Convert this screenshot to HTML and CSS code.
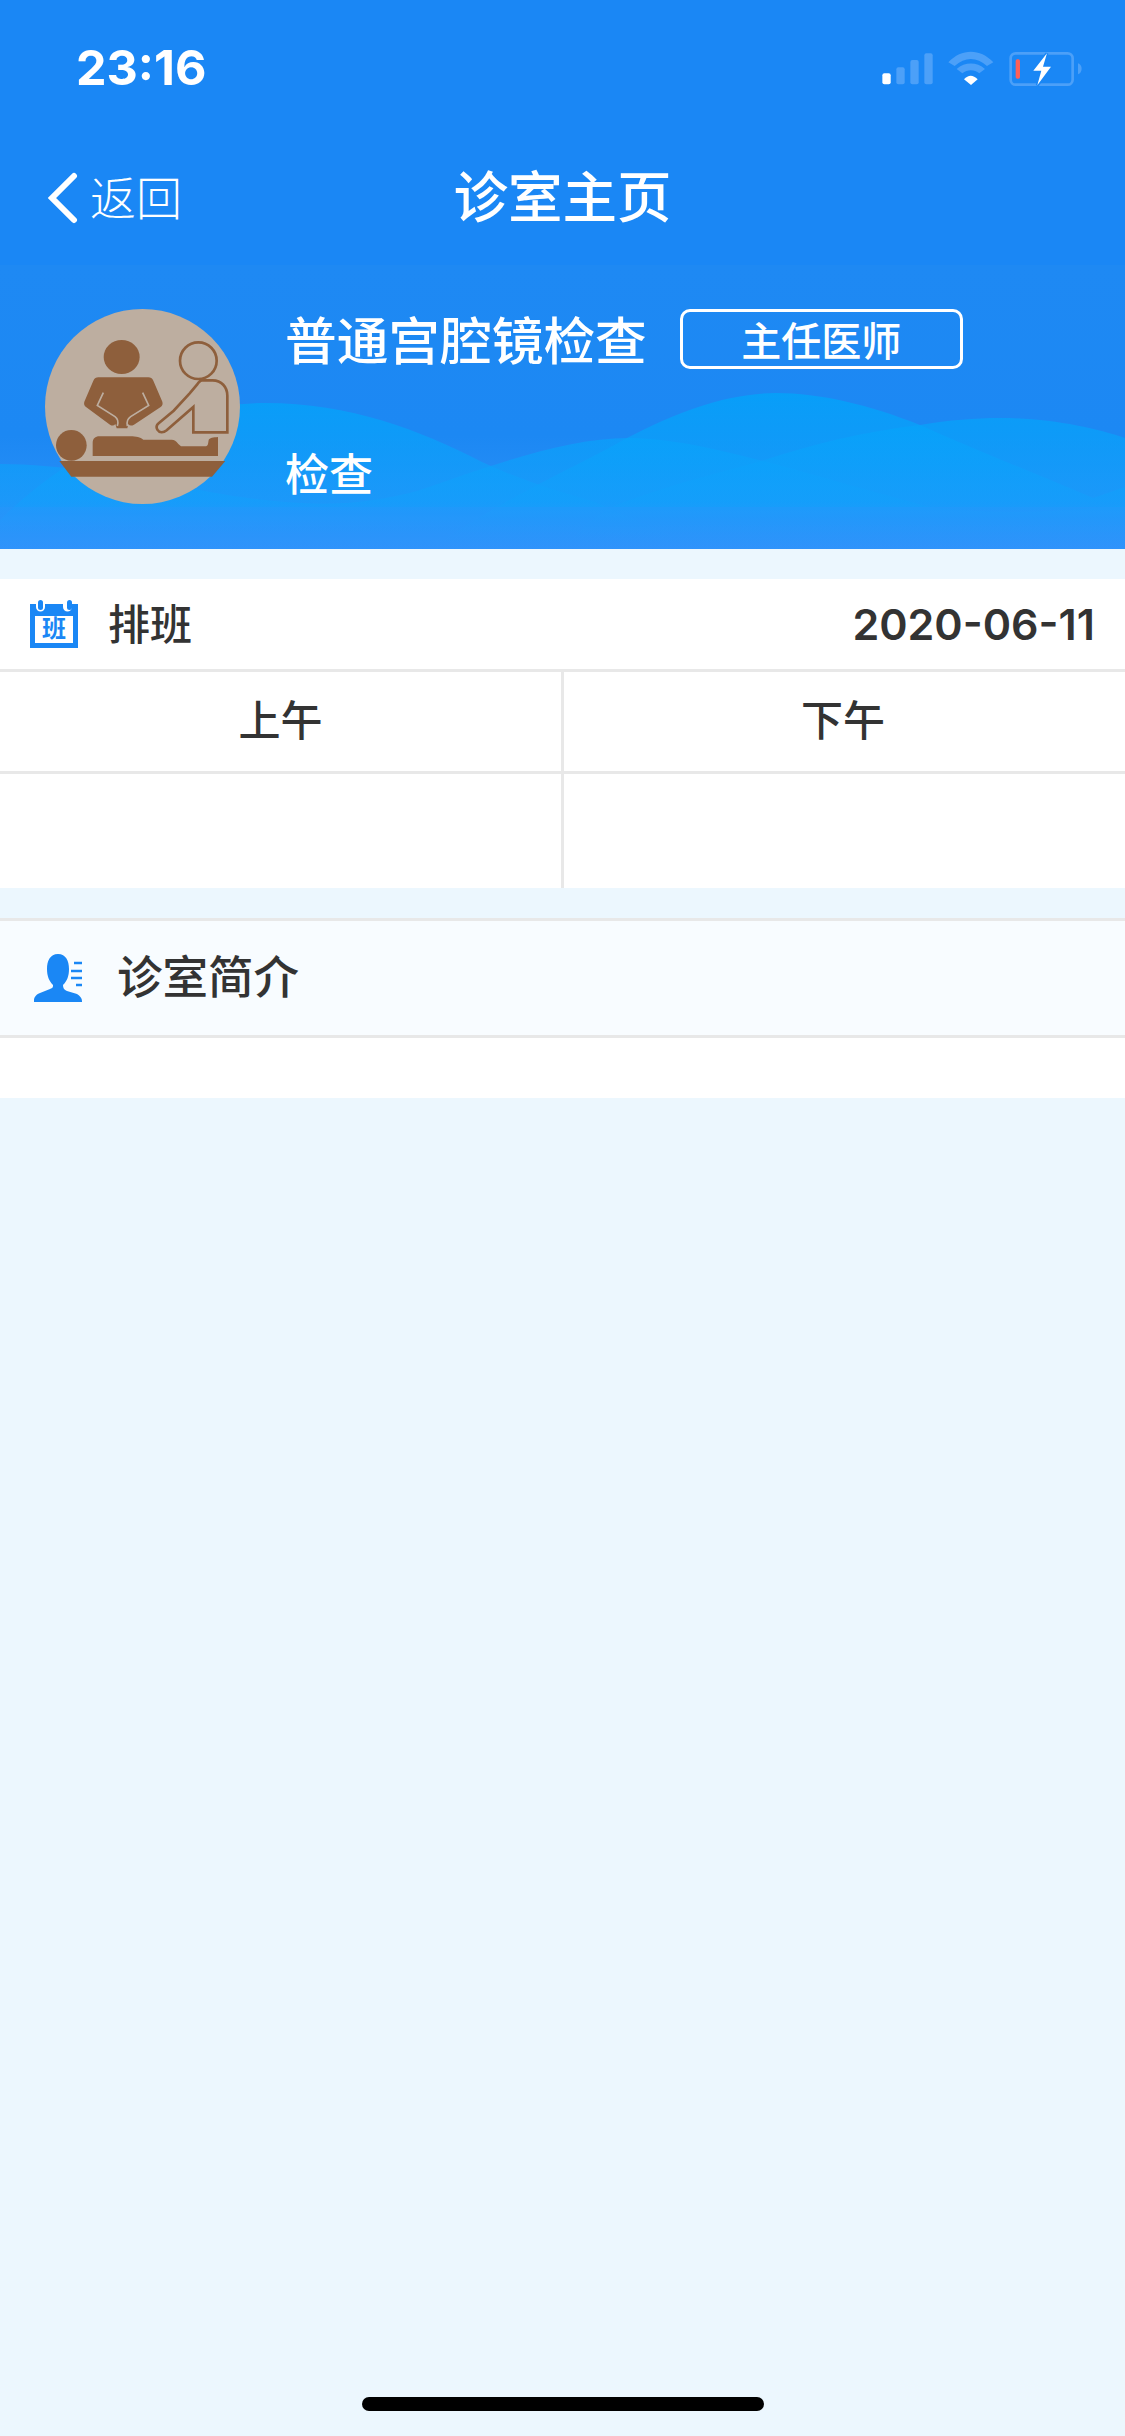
FILE: index.html
```html
<!DOCTYPE html>
<html lang="zh-CN">
<head>
<meta charset="utf-8">
<title>诊室主页</title>
<link rel="stylesheet" href="styles.css">
</head>
<body>
<div class="page">
  <header class="top">
    <div class="status">
      <span class="time">23:16</span>
      <svg class="status-icons" viewBox="120 60 610 110" aria-hidden="true">
        <rect x="127" y="130" width="25" height="33" rx="6" fill="#fff"/>
        <g fill="#4ca0f8">
          <rect x="169" y="112" width="25" height="51" rx="6"/>
          <rect x="211" y="90" width="25" height="73" rx="6"/>
          <rect x="253" y="70" width="25" height="93" rx="6"/>
          <path d="M325 97C365 55 420 55 460 97L441 108C410 80 375 80 344 108Z"/>
          <path d="M350 117C375 95 410 95 435 117L418 130C403 118 382 118 367 130Z"/>
          <path d="M714 100c7 2 11 8 11 16s-4 14-11 17Z"/>
        </g>
        <rect x="512" y="70" width="186" height="94" rx="15" fill="none" stroke="#4ca0f8" stroke-width="8"/>
        <path d="M372 148c13-14 27-14 41 0l-20 17Z" fill="#fff"/>
        <rect x="527" y="88" width="13" height="58" rx="5" fill="#ff5f57"/>
        <path d="M621 70 580 122h24l-12 44 41-56h-24Z" fill="#fff" stroke="#1a87f5" stroke-width="9" paint-order="stroke"/>
      </svg>
    </div>
    <nav class="nav">
      <div class="back">
        <svg class="chevron" viewBox="0 0 32 52" aria-hidden="true"><path d="M28 4 6 26l22 22" fill="none" stroke="#fff" stroke-width="6" stroke-linecap="round" stroke-linejoin="miter"/></svg>
        <span>返回</span>
      </div>
      <h1 class="title">诊室主页</h1>
      <div></div>
    </nav>
  </header>

  <section class="banner">
    <svg class="waves" viewBox="0 265 1125 284" preserveAspectRatio="none" aria-hidden="true">
      <defs>
        <linearGradient id="wave" x1="0" y1="390" x2="0" y2="549" gradientUnits="userSpaceOnUse">
          <stop offset="0" stop-color="#00a6fa" stop-opacity=".75"/>
          <stop offset=".7" stop-color="#12a0fb" stop-opacity=".55"/>
          <stop offset="1" stop-color="#2f93fb" stop-opacity=".3"/>
        </linearGradient>
      </defs>
      <path fill="url(#wave)" d="M0 464C60 464 130 476 210 492C290 506 350 510 420 490C500 462 570 438 628 438C700 438 790 470 930 507C1000 515 1060 512 1125 505V549H0Z"/>
      <path fill="url(#wave)" d="M0 520C70 450 170 403 265 403C350 403 420 430 482 462C520 480 560 492 595 502L700 549H0Z"/>
      <path fill="url(#wave)" d="M430 549C500 500 570 470 627 438C680 410 730 393 776 393C820 393 870 405 920 425C980 452 1040 475 1093 498L1125 487V549Z"/>
      <path fill="url(#wave)" d="M560 549C580 530 600 510 624 502C670 485 710 475 758 462C810 445 860 432 920 425C950 420 975 418 1000 418C1050 418 1095 428 1125 438V549Z"/>
      <path fill="#2f93fb" fill-opacity=".25" d="M0 507H1125V549H0Z"/>
    </svg>
    <div class="avatar">
      <svg viewBox="135 147 585 585" aria-hidden="true">
        <circle cx="427.5" cy="439.5" r="292.500" fill="#bdaea0"/>
        <g fill="#8e5f3c">
          <ellipse cx="365" cy="291" rx="54" ry="51"/>
          <path d="M295 352H445Q455 352 460 362L487 425Q490 435 482 441L402 494Q390 500 385 492L382 505H350L346 492Q340 500 330 494L258 441Q250 435 253 425L280 362Q285 352 295 352Z"/>
          <circle cx="214" cy="556" r="46"/>
          <path d="M278 588v-40c0-12 8-19 20-19h92c20 0 30 3 40 10h85c8 0 13 3 20 13l8 7h72c5 0 8-2 9-7l2-12c2-6 14-8 28-9v57Z"/>
          <path d="M178 603h498l-40 47H214Z"/>
        </g>
        <path d="M310 398 292 436 345 470Q358 480 352 498M428 398 446 436 392 470Q378 480 382 498" fill="none" stroke="#bdaea0" stroke-width="5"/>
        <g fill="none" stroke="#8e5f3c" stroke-width="8">
          <circle cx="595" cy="302" r="55"/>
          <path d="M606 361h32c26 0 44 20 44 46v110h-102v-76l-80 70c-10 8-22 8-28-2-4-7-2-14 4-19l45-38 48-52 22-26c4-6 9-13 15-13Z"/>
        </g>
      </svg>
    </div>
    <div class="info">
      <div class="info-row">
        <span class="name">普通宫腔镜检查</span>
        <span class="tag">主任医师</span>
      </div>
      <div class="kind">检查</div>
    </div>
  </section>

  <section class="schedule">
    <div class="row-head">
      <svg class="cal" viewBox="0 0 48 48" aria-hidden="true">
        <path d="M0 4h6v3a4.500 4.500 0 0 0 9 0V4h18v3a4.500 4.500 0 0 0 9 0V4h6v44H0Z" fill="#1a87f5"/>
        <rect x="8" y="0" width="5" height="10" rx="2.500" fill="#1a87f5"/>
        <rect x="37" y="0" width="5" height="10" rx="2.500" fill="#1a87f5"/>
        <rect x="5" y="16" width="38" height="27" fill="#fff"/>
        <text x="24" y="37" class="cal-text">班</text>
      </svg>
      <span class="head-label">排班</span>
      <span class="date">2020-06-11</span>
    </div>
    <div class="table">
      <div class="cell cell-head">上午</div>
      <div class="cell cell-head">下午</div>
      <div class="cell cell-body"></div>
      <div class="cell cell-body"></div>
    </div>
  </section>

  <section class="intro">
    <div class="intro-head">
      <svg class="person" viewBox="0 0 48 48" aria-hidden="true">
        <path d="M24 0c8 0 11 7 11 15 0 7-2 12-6 16 0 3 1 5 4 6l10 3c3 2 5 4 5 7v1H0v-2c0-3 3-6 6-7l10-4c3-1 3-2 3-4-4-4-6-9-6-16 0-8 3-15 11-15Z" fill="#1a87f5"/>
        <path d="M40 9h8M37 17h11M37 24h11M42 31h6" stroke="#1a87f5" stroke-width="2.500"/>
      </svg>
      <span class="head-label">诊室简介</span>
    </div>
    <div class="intro-body"></div>
  </section>

  <div class="home-bar"></div>
</div>
</body>
</html>
```

FILE: styles.css
```css
* { box-sizing: border-box; }
html, body { margin: 0; padding: 0; }
body {
  background: #ecf7fe;
  font-family: "Noto Sans CJK SC", "Noto Sans", sans-serif;
  font-weight: 500;
  color: #333;
}
.page {
  width: 1125px;
  height: 2436px;
  display: flex;
  flex-direction: column;
  overflow: hidden;
}
.top { background: #1a87f5; color: #fff; height: 265px; }
.status {
  height: 132px;
  padding: 0 42px 0 76px;
  display: flex;
  align-items: center;
  justify-content: space-between;
}
.time {
  font-family: Inter, sans-serif;
  font-weight: 700;
  font-size: 48.500px;
  line-height: 1;
  position: relative;
  top: 2px;
}
.status-icons { width: 203.33px; height: 36.67px; display: block; position: relative; top: 2px; }
.nav {
  height: 133px;
  display: grid;
  grid-template-columns: 1fr auto 1fr;
  align-items: center;
  padding: 0 46px 8px;
}
.back { display: flex; align-items: center; gap: 12px; font-size: 46px; font-weight: 300; line-height: 1; }
.chevron { width: 32px; height: 52px; display: block; position: relative; top: 3px; }
.title { margin: 0; font-size: 54.500px; font-weight: 500; line-height: 1; letter-spacing: 0; }

.banner {
  position: relative;
  height: 284px;
  padding: 44px 0 0 45px;
  display: flex;
  gap: 45px;
  align-items: flex-start;
  color: #fff;
  background: linear-gradient(#1e89f3 0%, #1c88f3 60%, #2f93fb 100%);
}
.waves { position: absolute; left: 0; top: 0; width: 1125px; height: 284px; }
.avatar { position: relative; width: 195px; height: 195px; flex: none; }
.avatar svg { display: block; width: 195px; height: 195px; }
.info { position: relative; display: flex; flex-direction: column; }
.info-row { display: flex; align-items: center; gap: 33px; height: 60px; }
.name { font-size: 51.700px; line-height: 1; position: relative; top: -1px; }
.tag {
  width: 283px;
  height: 60px;
  border: 3px solid #fff;
  border-radius: 10px;
  font-size: 40px;
  display: flex;
  align-items: center;
  justify-content: center;
  line-height: 1;
}
.kind { font-size: 44px; line-height: 1; margin-top: 81px; }

.schedule { margin-top: 30px; background: #fff; }
.row-head {
  height: 93px;
  border-bottom: 3px solid #e8e8e8;
  display: flex;
  align-items: center;
  padding: 0 30px;
}
.cal { width: 48px; height: 48px; flex: none; margin-right: 30px; }
.cal-text { font-size: 24px; font-weight: 700; fill: #1a87f5; text-anchor: middle; }
.head-label { font-size: 42px; line-height: 1; color: #333; padding-bottom: 4px; }
.date {
  margin-left: auto;
  font-family: Inter, sans-serif;
  font-weight: 600;
  font-size: 43px;
  line-height: 1;
  color: #333;
}
.table { display: grid; grid-template-columns: 564px 561px; }
.cell { display: flex; align-items: center; justify-content: center; font-size: 42px; line-height: 1; }
.cell:nth-child(odd) { border-right: 3px solid #e8e8e8; }
.cell:nth-child(even) { padding-right: 3px; }
.cell-head { height: 102px; border-bottom: 3px solid #e8e8e8; padding-bottom: 8px; }
.cell-body { height: 114px; }

.intro { margin-top: 30px; }
.intro-head {
  height: 120px;
  background: #f8fcff;
  border-top: 3px solid #e8e8e8;
  border-bottom: 3px solid #e8e8e8;
  display: flex;
  align-items: center;
  padding-left: 34px;
}
.person { width: 48px; height: 48px; flex: none; margin-right: 35px; }
.intro-head .head-label { font-size: 45.500px; padding-bottom: 6px; }
.intro-body { height: 60px; background: #fff; }

.home-bar {
  margin: auto auto 25px;
  width: 402px;
  height: 14px;
  border-radius: 7px;
  background: #000;
}
```
